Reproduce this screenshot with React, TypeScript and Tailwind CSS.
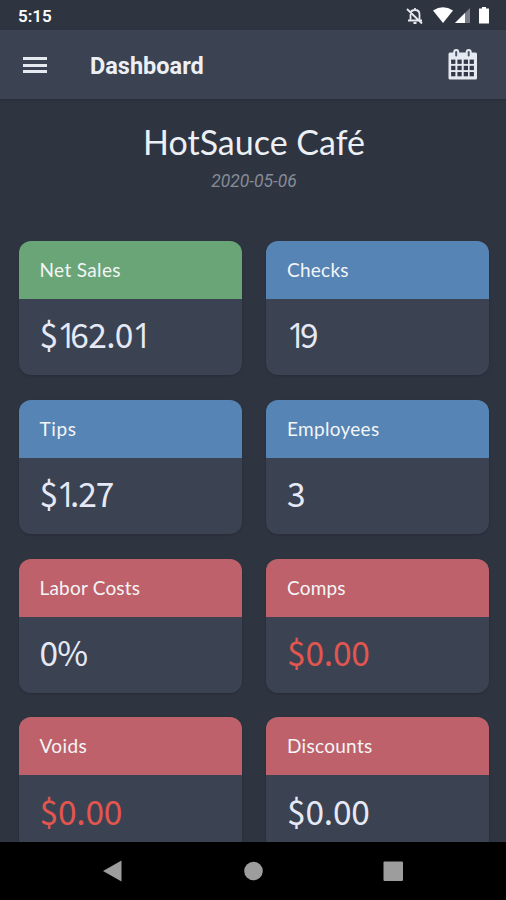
import clsx from "clsx";

type Metric = {
  title: string;
  value: string;
  header: string;
  titleTracking: string;
  valueStyle: string;
};

const metrics: Metric[] = [
  { title: "Net Sales", value: "$162.01", header: "bg-[#69a577]", titleTracking: "tracking-[0.35px]", valueStyle: "text-[#e5e9f5] tracking-[-0.7px]" },
  { title: "Checks", value: "19", header: "bg-[#5584b5]", titleTracking: "tracking-[0.25px]", valueStyle: "text-[#e5e9f5]" },
  { title: "Tips", value: "$1.27", header: "bg-[#5584b5]", titleTracking: "tracking-[0.6px]", valueStyle: "text-[#e5e9f5] tracking-[-1.1px]" },
  { title: "Employees", value: "3", header: "bg-[#5584b5]", titleTracking: "tracking-[0.3px]", valueStyle: "text-[#e5e9f5]" },
  { title: "Labor Costs", value: "0%", header: "bg-[#bf616a]", titleTracking: "tracking-[0.2px]", valueStyle: "text-[#e5e9f5] tracking-[-0.8px]" },
  { title: "Comps", value: "$0.00", header: "bg-[#bf616a]", titleTracking: "tracking-[0.2px]", valueStyle: "text-[#e2564f] tracking-[-0.2px]" },
  { title: "Voids", value: "$0.00", header: "bg-[#bf616a]", titleTracking: "tracking-[0.4px]", valueStyle: "text-[#e2564f] tracking-[-0.2px]" },
  { title: "Discounts", value: "$0.00", header: "bg-[#bf616a]", titleTracking: "tracking-[0.3px]", valueStyle: "text-[#e5e9f5] tracking-[-0.2px]" },
];

const StatusBar = () => (
  <div className="flex h-[30px] shrink-0 items-center justify-between pl-[18px] pr-[16px] pt-[2px]">
    <span className="font-[Roboto,sans-serif] text-[17px] font-semibold leading-5 text-white">5:15</span>
    <svg width="86" height="20" viewBox="404 6 86 20" fill="#fff">
      {/* muted bell */}
      <g fill="none" stroke="#e4e7ee" strokeWidth="1.8">
        <path d="M410.5 20v-5.500c0-2.500 1.500-4.500 4.500-4.500s4.500 2 4.500 4.500v5.500M408 20.500h14M415 8v2M413.500 23h3M407 9l15 14.500" />
      </g>
      <path d="M433 10.500Q443 4 453 10.500L443 23z" />
      <path d="M470 8v15h-15z" fill="#777d89" />
      <path d="M465 13v10h-10z" />
      <path d="M479 8.500h3V7h4v1.500h3V23.500h-10v-15z" />
    </svg>
  </div>
);

const CalendarIcon = () => (
  <svg width="30" height="32" viewBox="0 0 30 32">
    <path d="M2 4.500h25.500Q29 4.500 29 6v24q0 1.500-1.500 1.500h-25.500Q.5 31.500.5 30v-24Q.5 4.500 2 4.500" fill="#e5e9f0" />
    <g fill="#323848">
      {[11.6, 17.8, 24].map((y) =>
        [3.1, 9.4, 15.7, 21.6].map((x) => <rect key={`${x}-${y}`} x={x} y={y} width="4.300" height="4.300" />)
      )}
    </g>
    <g stroke="#e5e9f0" strokeWidth="2" fill="#4c566a">
      <rect x="6.200" y="2" width="4" height="7.500" rx="2" />
      <rect x="18.700" y="2" width="4" height="7.500" rx="2" />
    </g>
  </svg>
);

const AppBar = () => (
  <header className="flex h-[68.500px] shrink-0 items-center bg-[#3b4252] pl-[23px] pr-[28px] shadow-sm">
    <div className="flex w-[24px] flex-col gap-[3.500px] pt-[2px]">
      <span className="h-[3px] bg-[#e5e9f0]" />
      <span className="h-[3px] bg-[#e5e9f0]" />
      <span className="h-[3px] bg-[#e5e9f0]" />
    </div>
    <h1 className="ml-[43px] flex-1 pt-[4px] font-[Roboto,sans-serif] text-[23.500px] font-bold leading-8 text-[#eceff4]">Dashboard</h1>
    <CalendarIcon />
  </header>
);

// ones are set in a footless face with a tighter advance so they don't leave gaps
const Amount = ({ value }: { value: string }) => (
  <>
    {value.split(/(1)/).map((part, i) =>
      part === "1" ? (
        <span key={i} className="font-['Open_Sans',sans-serif] text-[34px] tracking-[-6.500px]">1</span>
      ) : (
        part
      )
    )}
  </>
);

const MetricCard = ({ title, value, header, titleTracking, valueStyle }: Metric) => (
  <div className="h-[134px] overflow-hidden rounded-[12px] bg-[#3b4252] shadow-sm">
    <div className={clsx("flex h-[58px] items-center pl-[21px]", header)}>
      <span className={clsx("font-[Lato,sans-serif] text-[19px] leading-6 text-[#f3f5f7]", titleTracking)}>{title}</span>
    </div>
    <div className="flex h-[76px] items-center pb-[5px] pl-[21px]">
      <p className={clsx("font-['Noto_Sans_CJK_JP',sans-serif] text-[33.500px] leading-10", valueStyle)}>
        <Amount value={value} />
      </p>
    </div>
  </div>
);

const NavBar = () => (
  <nav className="h-[58px] shrink-0 bg-black">
    <svg width="506" height="58" viewBox="0 842 506 58" fill="#9d9d9d">
      <path d="M103 871l18.500-10.500v21z" />
      <circle cx="253.500" cy="871" r="9.300" />
      <rect x="383.500" y="861.500" width="19.500" height="19.500" rx="1" />
    </svg>
  </nav>
);

const App = () => (
  <div className="flex h-[900px] w-[506px] flex-col overflow-hidden bg-[#2e3440]">
    <StatusBar />
    <AppBar />
    <main className="min-h-0 flex-1 overflow-hidden">
      <div className="flex flex-col items-center pl-[2px] pt-[23px]">
        <h2 className="font-[Lato,sans-serif] text-[34px] leading-10 text-[#eceff4]">HotSauce Café</h2>
        <p className="mt-[7px] font-[Roboto,sans-serif] text-[17.500px] italic leading-6 text-[#858b97]">2020-05-06</p>
      </div>
      <div className="mt-[48.800px] grid grid-cols-2 gap-x-[24.500px] gap-y-[24.700px] pl-[18.500px] pr-[17px]">
        {metrics.map((metric) => (
          <MetricCard key={metric.title} {...metric} />
        ))}
      </div>
    </main>
    <NavBar />
  </div>
);

export default App;
